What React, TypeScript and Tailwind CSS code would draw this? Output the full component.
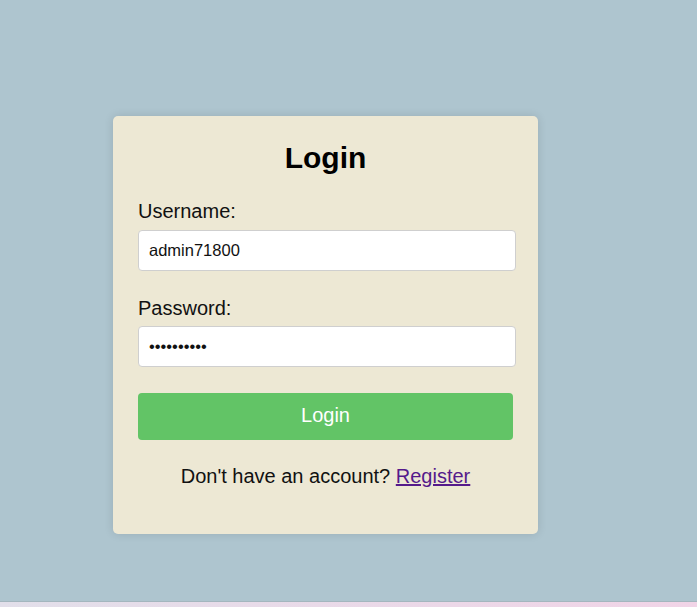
import { useState } from 'react'

export default function App() {
  const [username, setUsername] = useState('admin71800')
  const [password, setPassword] = useState('xxxxxxxxxx')

  return (
    <div className="h-[607px] overflow-hidden font-['Liberation_Sans',Arial,sans-serif] text-[#111]">
      <div className="h-[601px] bg-[#aec5cf] pt-[116px] pl-[113px]">
        <div className="w-[425px] h-[418px] bg-[#ede8d4] rounded-[5px] shadow-[0_0_10px_rgba(0,0,0,0.12)] px-[25px] pt-[25px]">
          <h2 className="text-[30px] leading-[34px] font-bold text-center text-black">Login</h2>
          <form className="mt-[25px]" onSubmit={(e) => e.preventDefault()}>
            <label className="block text-[20px] leading-[22px] mb-[8px]">Username:</label>
            <input
              type="text"
              value={username}
              onChange={(e) => setUsername(e.target.value)}
              className="block w-[378px] h-[41px] px-[10px] text-[16.5px] bg-white border border-[#cfcfcf] rounded-[4px] outline-none"
            />
            <label className="block text-[20px] leading-[22px] mt-[26px] mb-[7px]">Password:</label>
            <input
              type="password"
              value={password}
              onChange={(e) => setPassword(e.target.value)}
              className="block w-[378px] h-[41px] px-[10px] text-[16.5px] bg-white border border-[#cfcfcf] rounded-[4px] outline-none"
            />
            <button
              type="submit"
              className="block w-[375px] h-[47px] mt-[26px] pb-[3px] bg-[#62c466] text-white text-[20px] rounded-[4px]"
            >
              Login
            </button>
          </form>
          <p className="mt-[25px] text-[20px] leading-[22px] text-center">
            Don't have an account?{' '}
            <a href="#" className="text-[#551a8b] underline">
              Register
            </a>
          </p>
        </div>
      </div>
      <div className="h-[6px] border-t border-[#a3b6be] bg-gradient-to-r from-[#e2dfea] to-[#f1d4e7]" />
    </div>
  )
}
